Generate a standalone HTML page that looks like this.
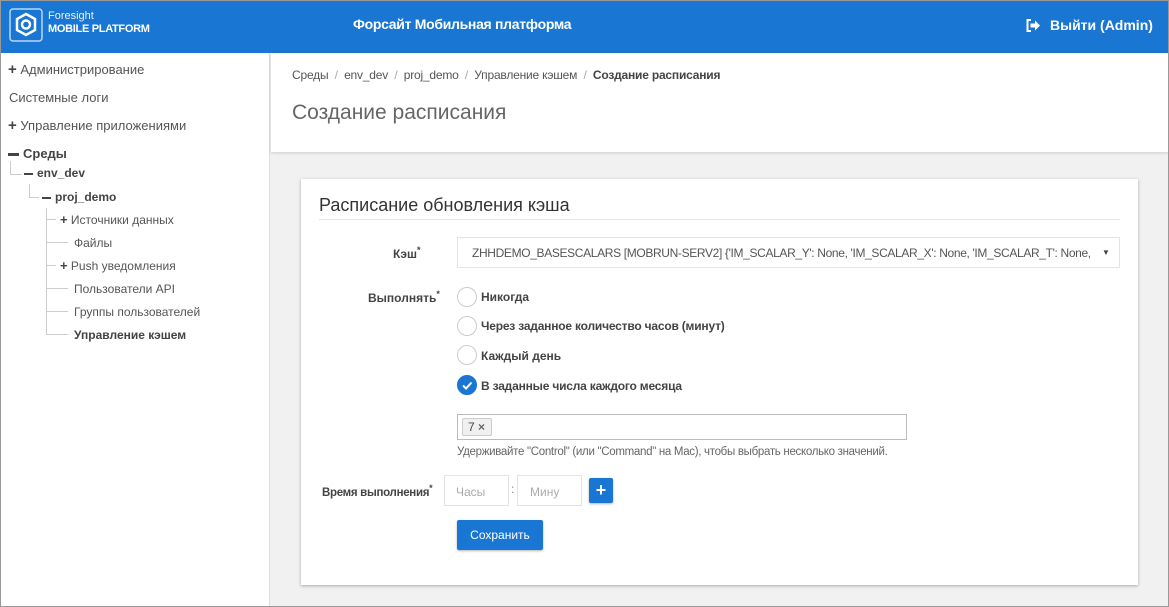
<!DOCTYPE html>
<html><head><meta charset="utf-8">
<style>
*{box-sizing:border-box;margin:0;padding:0}
body{width:1169px;height:607px;overflow:hidden;font-family:"Liberation Sans",sans-serif;background:#f1f1f1;position:relative;color:#555}
.a{position:absolute;white-space:nowrap}
#frame{position:absolute;left:0;top:0;width:1169px;height:607px;border:1px solid #999;pointer-events:none;z-index:9}
#hdr{position:absolute;left:0;top:0;width:1169px;height:53px;background:#1976d2;color:#fff}
#side{position:absolute;left:0;top:53px;width:270px;height:554px;background:#fff;border-right:1px solid #ddd}
#top{position:absolute;left:271px;top:53px;width:898px;height:99px;background:#fff;box-shadow:0 1px 3px rgba(0,0,0,.15)}
#card{position:absolute;left:301px;top:179px;width:837px;height:406px;background:#fff;box-shadow:0 1px 3px rgba(0,0,0,.3)}
.s{font-size:13px;color:#555}
.b{font-weight:bold;color:#444;font-size:12px}
.ln{position:absolute;background:#ccc}
.radio{position:absolute;width:20px;height:20px;border:1px solid #ccc;border-radius:50%;background:#fff}
.lbl{font-size:12px;font-weight:bold;color:#444}
.mi{display:inline-block;width:10px;height:3px;background:#444;vertical-align:middle;margin-right:4px}
</style></head><body>
<div id="hdr">
 <svg class="a" style="left:9px;top:8px" width="34" height="34" viewBox="0 0 34 34"><rect x="1" y="1" width="32" height="32" rx="3" fill="none" stroke="#fff" stroke-width="1.5" opacity=".7"/><path d="M17 6 L26 11 L26 22 L17 27 L8 22 L8 11Z" fill="none" stroke="#fff" stroke-width="2.5"/><circle cx="17" cy="16.5" r="4" fill="none" stroke="#fff" stroke-width="2.5"/></svg>
 <div class="a" style="left:48px;top:10px;font-size:11px;opacity:.9">Foresight</div>
 <div class="a" style="left:48px;top:23px;font-size:11px;font-weight:bold;letter-spacing:-.3px">MOBILE PLATFORM</div>
 <div class="a" style="left:353px;top:16px;font-size:14px;font-weight:bold;letter-spacing:-.3px">Форсайт Мобильная платформа</div>
 <svg class="a" style="left:1026px;top:19px" width="15" height="13" viewBox="0 0 15 13"><path d="M5 1H1.5v11H5" fill="none" stroke="#fff" stroke-width="2"/><path d="M4.5 4.5h4.5V1.5l5 5-5 5v-3H4.5z" fill="#fff"/></svg>
 <div class="a" style="left:1050px;top:17px;font-size:14px;font-weight:bold">Выйти (Admin)</div>
</div>
<div id="side">
 <div class="a s" style="left:8px;top:8px;font-size:13px"><b style="font-size:15px;color:#444">+</b> Администрирование</div>
 <div class="a s" style="left:9px;top:37px">Системные логи</div>
 <div class="a s" style="left:8px;top:64px"><b style="font-size:15px;color:#444">+</b> Управление приложениями</div>
 <div class="a s" style="left:8px;top:93px;font-weight:bold;color:#444"><span class="mi" style="width:11px"></span>Среды</div>
 <div class="ln" style="left:10px;top:108px;width:1px;height:14px"></div><div class="ln" style="left:10px;top:121px;width:12px;height:1px"></div>
 <div class="a b" style="left:24px;top:113px"><span class="mi" style="width:9px;height:2px"></span>env_dev</div>
 <div class="ln" style="left:29px;top:131px;width:1px;height:14px"></div><div class="ln" style="left:29px;top:144px;width:10px;height:1px"></div>
 <div class="a b" style="left:42px;top:137px"><span class="mi" style="width:9px;height:2px"></span>proj_demo</div>
 <div class="ln" style="left:46px;top:155px;width:1px;height:127px"></div>
 <div class="ln" style="left:46px;top:166px;width:10px;height:1px"></div>
 <div class="ln" style="left:46px;top:189px;width:22px;height:1px"></div>
 <div class="ln" style="left:46px;top:212px;width:10px;height:1px"></div>
 <div class="ln" style="left:46px;top:235px;width:22px;height:1px"></div>
 <div class="ln" style="left:46px;top:258px;width:22px;height:1px"></div>
 <div class="ln" style="left:46px;top:281px;width:22px;height:1px"></div>
 <div class="a s" style="left:60px;top:159px;font-size:12px"><b style="font-size:13px;color:#444">+</b> Источники данных</div>
 <div class="a s" style="left:74px;top:183px;font-size:12px">Файлы</div>
 <div class="a s" style="left:60px;top:205px;font-size:12px"><b style="font-size:13px;color:#444">+</b> Push уведомления</div>
 <div class="a s" style="left:74px;top:229px;font-size:12px">Пользователи API</div>
 <div class="a s" style="left:74px;top:252px;font-size:12px">Группы пользователей</div>
 <div class="a b" style="left:74px;top:275px">Управление кэшем</div>
</div>
<div id="top">
 <div class="a" style="left:21px;top:15px;font-size:12px;color:#555;letter-spacing:-.2px">Среды &nbsp;<span style="color:#aaa">/</span>&nbsp; env_dev &nbsp;<span style="color:#aaa">/</span>&nbsp; proj_demo &nbsp;<span style="color:#aaa">/</span>&nbsp; Управление кэшем &nbsp;<span style="color:#aaa">/</span>&nbsp; <b style="color:#444">Создание расписания</b></div>
 <div class="a" style="left:21px;top:48px;font-size:21px;color:#666">Создание расписания</div>
</div>
<div id="card">
 <div class="a" style="left:18px;top:16px;font-size:18px;color:#333">Расписание обновления кэша</div>
 <div style="position:absolute;left:18px;top:40px;width:801px;height:1px;background:#e5e5e5"></div>
 <div class="a lbl" style="left:92px;top:66px">Кэш<sup style="font-size:9px">*</sup></div>
 <div style="position:absolute;left:156px;top:58px;width:663px;height:31px;border:1px solid #e3e3e3;overflow:hidden">
  <div class="a" style="left:14px;top:8px;font-size:12px;color:#555;letter-spacing:-.35px">ZHHDEMO_BASESCALARS [MOBRUN-SERV2] {'IM_SCALAR_Y': None, 'IM_SCALAR_X': None, 'IM_SCALAR_T': None, 'IM_S</div>
  <div style="position:absolute;right:0;top:0;width:26px;height:29px;background:#fff;font-size:8px;color:#444;text-align:center;line-height:29px">▼</div>
 </div>
 <div class="a lbl" style="left:67px;top:110px">Выполнять<sup style="font-size:9px">*</sup></div>
 <div class="radio" style="left:156px;top:108px"></div><div class="a lbl" style="left:180px;top:111px">Никогда</div>
 <div class="radio" style="left:156px;top:137px"></div><div class="a lbl" style="left:180px;top:140px;letter-spacing:-.2px">Через заданное количество часов (минут)</div>
 <div class="radio" style="left:156px;top:166px"></div><div class="a lbl" style="left:180px;top:170px">Каждый день</div>
 <div class="radio" style="left:156px;top:196px;background:#1976d2;border-color:#1976d2"><svg width="18" height="18" viewBox="0 0 18 18"><path d="M5 9.5l3 3 5.5-6" fill="none" stroke="#fff" stroke-width="2"/></svg></div>
 <div class="a lbl" style="left:180px;top:200px;letter-spacing:-.2px">В заданные числа каждого месяца</div>
 <div style="position:absolute;left:156px;top:235px;width:450px;height:26px;border:1px solid #bbb">
  <div style="position:absolute;left:4px;top:3px;width:30px;height:18px;background:#f0f0f0;border:1px solid #ccc;border-radius:2px;font-size:12px;color:#444;padding:1px 0 0 5px">7 <b style="color:#666">×</b></div>
 </div>
 <div class="a" style="left:156px;top:267px;font-size:11.5px;color:#666;letter-spacing:-.3px">Удерживайте "Control" (или "Command" на Mac), чтобы выбрать несколько значений.</div>
 <div class="a lbl" style="left:21px;top:304px;font-size:11.5px;letter-spacing:-.3px">Время выполнения<sup style="font-size:9px">*</sup></div>
 <div style="position:absolute;left:143px;top:296px;width:65px;height:31px;border:1px solid #e3e3e3;font-size:12px;color:#aaa;padding:9px 0 0 11px">Часы</div>
 <div class="a" style="left:210px;top:303px;font-size:12px;color:#888">:</div>
 <div style="position:absolute;left:216px;top:296px;width:65px;height:31px;border:1px solid #e3e3e3;font-size:12px;color:#aaa;padding:9px 0 0 12px">Мину</div>
 <div style="position:absolute;left:288px;top:299px;width:24px;height:25px;background:#1976d2;border-radius:2px;box-shadow:0 1px 2px rgba(0,0,0,.3);color:#fff;font-weight:bold;font-size:18px;text-align:center;line-height:24px">+</div>
 <div style="position:absolute;left:156px;top:341px;width:86px;height:30px;background:#1976d2;border-radius:2px;box-shadow:0 1px 2px rgba(0,0,0,.3);color:#fff;font-size:12px;text-align:center;line-height:30px">Сохранить</div>
</div>
<div id="frame"></div>
</body></html>
